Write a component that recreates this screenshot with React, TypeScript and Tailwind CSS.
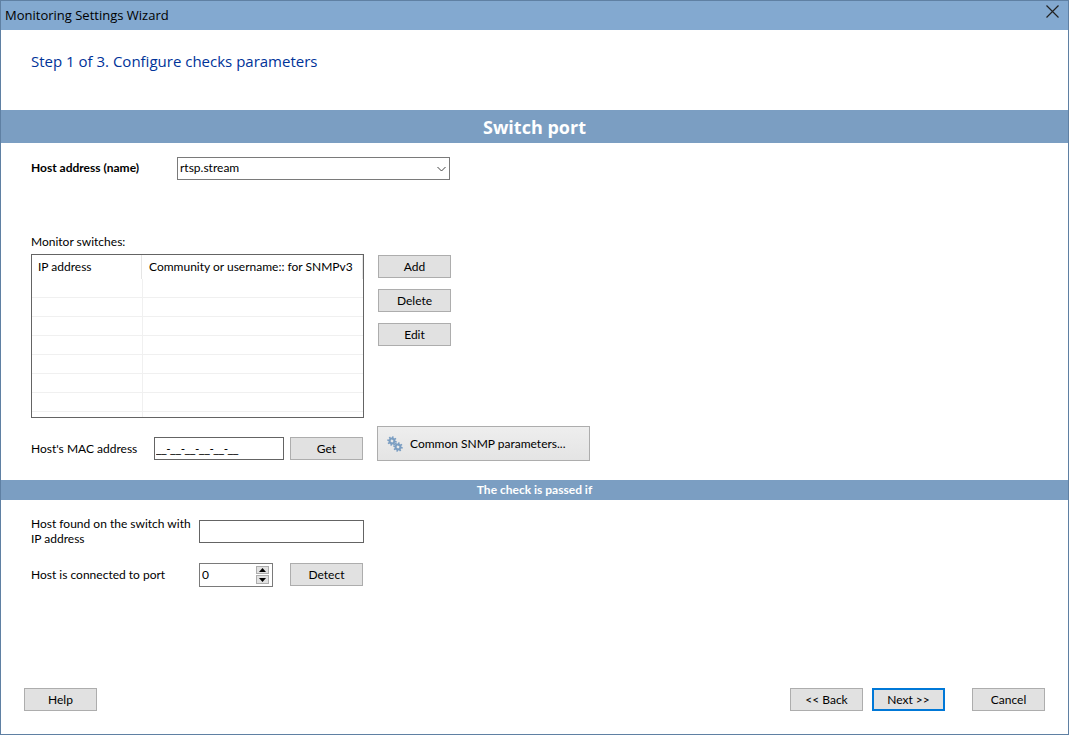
import { useState } from "react";
import type { ReactNode } from "react";

interface ButtonProps {
  children: ReactNode;
  primary?: boolean;
}

function Button({ children, primary = false }: ButtonProps) {
  return (
    <button
      type="button"
      className={
        primary
          ? "h-[23px] w-[73px] shrink-0 border-2 border-[#0078d7] bg-[#e1e1e1] text-center leading-[19px]"
          : "h-[23px] w-[73px] shrink-0 border border-[#adadad] bg-[#e1e1e1] text-center leading-[21px]"
      }
    >
      {children}
    </button>
  );
}

function Gear({ x, y }: { x: number; y: number }) {
  return (
    <g transform={`translate(${x} ${y}) rotate(12)`}>
      {[0, 45, 90, 135].map((angle) => (
        <rect key={angle} x="-0.8" y="-4.8" width="1.6" height="9.6" transform={`rotate(${angle})`} />
      ))}
      <circle r="2.5" fill="none" stroke="#7b9ec2" strokeWidth="1.8" />
      <circle r="1.4" fill="#e9e9e9" />
    </g>
  );
}

function GearsIcon() {
  return (
    <svg width="16" height="16" viewBox="0 0 16 16" fill="#7b9ec2" aria-hidden="true">
      <Gear x={5} y={5} />
      <Gear x={11} y={11} />
    </svg>
  );
}

function SwitchTable() {
  return (
    <div className="h-[164px] w-[333px] overflow-hidden border border-[#646464] bg-white">
      <table className="w-full table-fixed border-separate border-spacing-0 text-left" aria-labelledby="switches-label">
        <colgroup>
          <col className="w-[111px]" />
          <col />
        </colgroup>
        <thead>
          <tr>
            <th className="p-0 font-normal">
              <div className="mr-px h-6 border-r border-[#e5e5e5] pl-1.5 leading-6">IP address</div>
            </th>
            <th className="p-0 font-normal">
              <div className="h-6 border-r border-[#e5e5e5] pl-1.5 leading-6 whitespace-nowrap">
                Community or username:: for SNMPv3
              </div>
            </th>
          </tr>
        </thead>
        <tbody>
          {[1, 2, 3, 4, 5, 6, 7, 8].map((row) => (
            <tr key={row}>
              <td className="h-[19px] border-r border-b border-[#f0f0f0] p-0" />
              <td className="h-[19px] border-b border-[#f0f0f0] p-0" />
            </tr>
          ))}
        </tbody>
      </table>
    </div>
  );
}

function PortSpinner() {
  const [port, setPort] = useState(0);

  return (
    <div className="flex h-6 w-[74px] border border-[#7a7a7a] bg-white">
      <input
        id="port"
        type="number"
        min={0}
        value={port}
        onChange={(e) => setPort(Number(e.target.value))}
        className="h-[22px] min-w-0 flex-1 pb-0.5 pl-0.5 outline-none [appearance:textfield] [&::-webkit-inner-spin-button]:appearance-none"
      />
      <div className="flex flex-col gap-px px-[3px] py-0.5">
        <button
          type="button"
          aria-label="Increase port"
          onClick={() => setPort(port + 1)}
          className="flex h-2 w-[13px] items-center justify-center border border-[#adadad] bg-[#e1e1e1]"
        >
          <svg width="7" height="4" viewBox="0 0 7 4" aria-hidden="true">
            <path d="M0 4 3.5 0 7 4z" />
          </svg>
        </button>
        <button
          type="button"
          aria-label="Decrease port"
          onClick={() => setPort(Math.max(0, port - 1))}
          className="flex h-[9px] w-[13px] items-center justify-center border border-[#adadad] bg-[#e1e1e1]"
        >
          <svg width="7" height="4" viewBox="0 0 7 4" aria-hidden="true">
            <path d="M0 0 3.5 4 7 0z" />
          </svg>
        </button>
      </div>
    </div>
  );
}

export default function App() {
  return (
    <div className="flex min-h-screen flex-col border border-[#5f80a3] bg-white font-['Lato','Open_Sans',sans-serif] text-[12px] leading-[15px] text-black">
      <header className="flex h-[29px] items-center justify-between bg-[#83a9d0] pl-1">
        <h1 className="font-['Open_Sans',sans-serif] text-[13px]">Monitoring Settings Wizard</h1>
        <button type="button" aria-label="Close" className="flex h-full w-[31px] justify-center pt-1">
          <svg width="13" height="13" viewBox="0 0 13 13" stroke="#222" strokeWidth="1.2" aria-hidden="true">
            <path d="M.5.5l12 12M12.5.5l-12 12" />
          </svg>
        </button>
      </header>

      <div className="h-20 px-[30px] pt-[21px]">
        <h2 className="font-['Open_Sans',sans-serif] text-[15px] leading-5 text-[#003399]">
          Step 1 of 3. Configure checks parameters
        </h2>
      </div>

      <h3 className="h-[33px] bg-[#7b9ec2] text-center font-['Open_Sans',sans-serif] text-[18px] leading-[34px] font-bold text-white">
        Switch port
      </h3>

      <section className="h-[337px] px-[30px] pt-3.5">
        <div className="flex items-center">
          <label htmlFor="host" className="w-[146px] pb-0.5 font-bold">
            Host address (name)
          </label>
          <div className="grid w-[273px] items-center">
            <select
              id="host"
              className="col-start-1 row-start-1 h-[23px] w-full appearance-none border border-[#7a7a7a] bg-white pb-0.5 pl-0.5"
            >
              <option>rtsp.stream</option>
            </select>
            <svg
              width="9"
              height="6"
              viewBox="0 0 9 6"
              fill="none"
              stroke="#444"
              className="pointer-events-none col-start-1 row-start-1 mr-1 justify-self-end"
              aria-hidden="true"
            >
              <path d="M.5 1l4 4 4-4" />
            </svg>
          </div>
        </div>

        <p id="switches-label" className="mt-[54px] mb-[5px]">
          Monitor switches:
        </p>
        <div className="flex items-start gap-3.5">
          <SwitchTable />
          <div className="flex flex-col gap-[11px] pt-px">
            <Button>Add</Button>
            <Button>Delete</Button>
            <Button>Edit</Button>
          </div>
        </div>

        <div className="mt-2 flex items-end">
          <label htmlFor="mac" className="w-[123px] pb-[5px]">
            Host's MAC address
          </label>
          <div className="flex gap-1.5 pb-px">
            <input
              id="mac"
              type="text"
              defaultValue="__-__-__-__-__-__"
              className="h-[23px] w-[130px] border border-[#646464] bg-white px-px font-['Open_Sans',sans-serif] outline-none"
            />
            <Button>Get</Button>
          </div>
          <button
            type="button"
            className="ml-3.5 flex h-[35px] w-[213px] items-center gap-[7px] border border-[#adadad] bg-linear-to-b from-[#eeeeee] to-[#e4e4e4] pl-[9px] whitespace-nowrap"
          >
            <GearsIcon />
            Common SNMP parameters...
          </button>
        </div>
      </section>

      <h3 className="h-5 bg-[#7b9ec2] text-center leading-5 font-bold text-white">The check is passed if</h3>

      <section className="px-[30px] pt-4">
        <div className="flex items-center">
          <label htmlFor="switch-ip" className="w-[168px] whitespace-nowrap">
            Host found on the switch with
            <br />
            IP address
          </label>
          <input
            id="switch-ip"
            type="text"
            className="h-[23px] w-[165px] border border-[#646464] bg-white px-0.5 outline-none"
          />
        </div>
        <div className="mt-[17px] flex items-center">
          <label htmlFor="port" className="w-[168px] pb-0.5">
            Host is connected to port
          </label>
          <div className="flex gap-[17px]">
            <PortSpinner />
            <Button>Detect</Button>
          </div>
        </div>
      </section>

      <footer className="mt-auto flex px-[23px] pb-[23px]">
        <Button>Help</Button>
        <div className="ml-auto flex gap-[9px]">
          <Button>&lt;&lt; Back</Button>
          <Button primary>Next &gt;&gt;</Button>
        </div>
        <div className="ml-[27px] flex">
          <Button>Cancel</Button>
        </div>
      </footer>
    </div>
  );
}
